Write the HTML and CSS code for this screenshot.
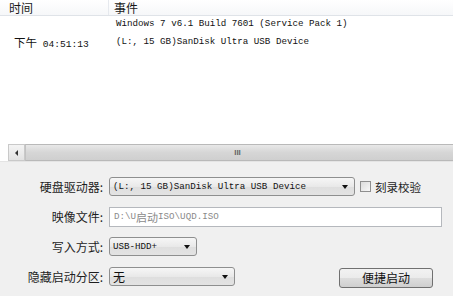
FILE: index.html
```html
<!DOCTYPE html>
<html>
<head>
<meta charset="utf-8">
<link rel="stylesheet" href="styles.css">
</head>
<body>
<div class="app">
  <div class="list">
    <div class="list-head">
      <div class="col col-time">时间</div>
      <div class="col col-event">事件</div>
    </div>
    <div class="log-row">
      <div class="cell-time"><span class="cjk-t">下午</span> 04:51:13</div>
      <div class="cell-event">
        <div class="line">Windows 7 v6.1 Build 7601 (Service Pack 1)</div>
        <div class="line">(L:, 15 GB)SanDisk Ultra USB Device</div>
      </div>
    </div>
  </div>
  <div class="hscroll">
    <div class="sb-btn"><span class="arrow-left"></span></div>
    <div class="sb-thumb"><span class="grip">III</span></div>
  </div>
  <div class="form">
    <div class="frow">
      <div class="label">硬盘驱动器:</div>
      <div class="select sel-drive"><span class="val mono">(L:, 15 GB)SanDisk Ultra USB Device</span><span class="caret"></span></div>
      <label class="check"><span class="box"></span><span class="ctext">刻录校验</span></label>
    </div>
    <div class="frow">
      <div class="label">映像文件:</div>
      <div class="input mono">D:\U<span class="cjk">启动</span>ISO\UQD.ISO</div>
    </div>
    <div class="frow">
      <div class="label">写入方式:</div>
      <div class="select sel-mode"><span class="val mono">USB-HDD+</span><span class="caret"></span></div>
    </div>
    <div class="frow">
      <div class="label">隐藏启动分区:</div>
      <div class="select sel-hide"><span class="val cjkval">无</span><span class="caret"></span></div>
      <div class="spacer"></div>
      <div class="btn">便捷启动</div>
    </div>
  </div>
</div>
</body>
</html>
```

FILE: styles.css
```css
* { box-sizing: border-box; }
html, body { margin: 0; padding: 0; }
body {
  width: 453px;
  height: 296px;
  overflow: hidden;
  background: #f0f0f0;
  font-family: "Noto Sans CJK SC", "Liberation Sans", sans-serif;
  color: #111;
}
.app { width: 453px; height: 296px; display: flex; flex-direction: column; }

.list { height: 144px; background: #fff; }
.list-head {
  height: 16px;
  display: flex;
  background: linear-gradient(#ffffff, #f6f7f9);
  border-bottom: 1px solid #dfe3e8;
}
.col { font-size: 12px; line-height: 15px; color: #1a1a1a; }
.col-time { width: 109px; padding-left: 9px; border-right: 1px solid #e6e9ee; }
.col-event { padding-left: 5px; }

.log-row { display: flex; margin-top: -1px; }
.cell-time {
  width: 109px;
  padding-left: 14px;
  padding-top: 18px;
  font-family: "Liberation Mono", monospace;
  font-size: 9.6px;
  line-height: 18px;
  white-space: nowrap;
  color: #111;
}
.cjk-t { font-family: "Noto Sans CJK SC", sans-serif; font-size: 11.5px; }
.mono {
  font-family: "Liberation Mono", "Noto Sans CJK SC", monospace;
}
.cell-event {
  padding-left: 7px;
  font-family: "Liberation Mono", monospace;
  font-size: 9.2px;
  line-height: 18px;
  white-space: nowrap;
  color: #111;
}

.hscroll {
  height: 17px;
  display: flex;
  background: #fff;
  padding-left: 8px;
}
.sb-btn {
  width: 17px;
  height: 17px;
  border: 1px solid #c9c9c9;
  background: linear-gradient(#f4f4f4, #e2e2e2);
  display: flex;
  align-items: center;
  justify-content: center;
}
.arrow-left {
  width: 0; height: 0;
  border-top: 3px solid transparent;
  border-bottom: 3px solid transparent;
  border-right: 3px solid #333;
}
.sb-thumb {
  flex: 1;
  height: 17px;
  border-top: 1px solid #b9b9b9;
  border-bottom: 1px solid #b9b9b9;
  border-left: 1px solid #c2c2c2;
  background: linear-gradient(#e8e8e8, #d6d6d6 50%, #cfcfcf);
  display: flex;
  justify-content: center;
  align-items: center;
}
.grip {
  font-family: "Liberation Sans", sans-serif;
  font-size: 8px;
  line-height: 8px;
  color: #666;
  margin-left: -4px;
  font-weight: bold;
}

.form {
  flex: 1;
  display: flex;
  flex-direction: column;
  gap: 11px;
  padding-top: 15px;
  border-top: 1px solid #e4e4e4;
}
.frow {
  display: flex;
  align-items: center;
  height: 19px;
}
.label {
  width: 103px;
  text-align: right;
  font-size: 12px;
  color: #1e1e1e;
  margin-right: 6px;
  white-space: nowrap;
}
.select {
  height: 19px;
  display: flex;
  align-items: center;
  justify-content: space-between;
  border: 1px solid #8e8f8f;
  border-radius: 3px;
  background: linear-gradient(#f6f6f6, #e9e9e9 50%, #dedede 51%, #e3e3e3);
  padding: 0 6px 0 3px;
}
.val { white-space: nowrap; font-size: 9.2px; color: #111; }
.cjkval { font-size: 12px; }
.caret {
  width: 0; height: 0;
  border-left: 3.5px solid transparent;
  border-right: 3.5px solid transparent;
  border-top: 4px solid #111;
}
.sel-drive { width: 246px; }
.sel-mode { width: 88px; }
.sel-hide { width: 126px; }

.check { display: flex; align-items: center; margin-left: 5px; }
.box {
  width: 11px; height: 11px;
  border: 1px solid #8f8f8f;
  background: linear-gradient(135deg, #dcdcdc, #f8f8f8);
  margin-right: 4px;
}
.ctext { font-size: 11.5px; color: #1e1e1e; }

.input {
  width: 333px;
  height: 20px;
  background: #fff;
  border: 1px solid #b5b8bd;
  display: flex;
  align-items: center;
  padding-left: 4px;
  font-size: 9.2px;
  color: #8a8a8a;
  white-space: nowrap;
}
.cjk { font-family: "Noto Sans CJK SC", sans-serif; font-size: 11px; }

.spacer { flex: 1; }
.btn {
  width: 94px;
  height: 20px;
  margin-right: 20px;
  margin-top: 2px;
  border: 1px solid #707070;
  border-radius: 3px;
  background: linear-gradient(#f2f2f2, #ebebeb 50%, #dddddd 51%, #cfcfcf);
  font-size: 12px;
  display: flex;
  align-items: center;
  justify-content: center;
  color: #111;
}
```
